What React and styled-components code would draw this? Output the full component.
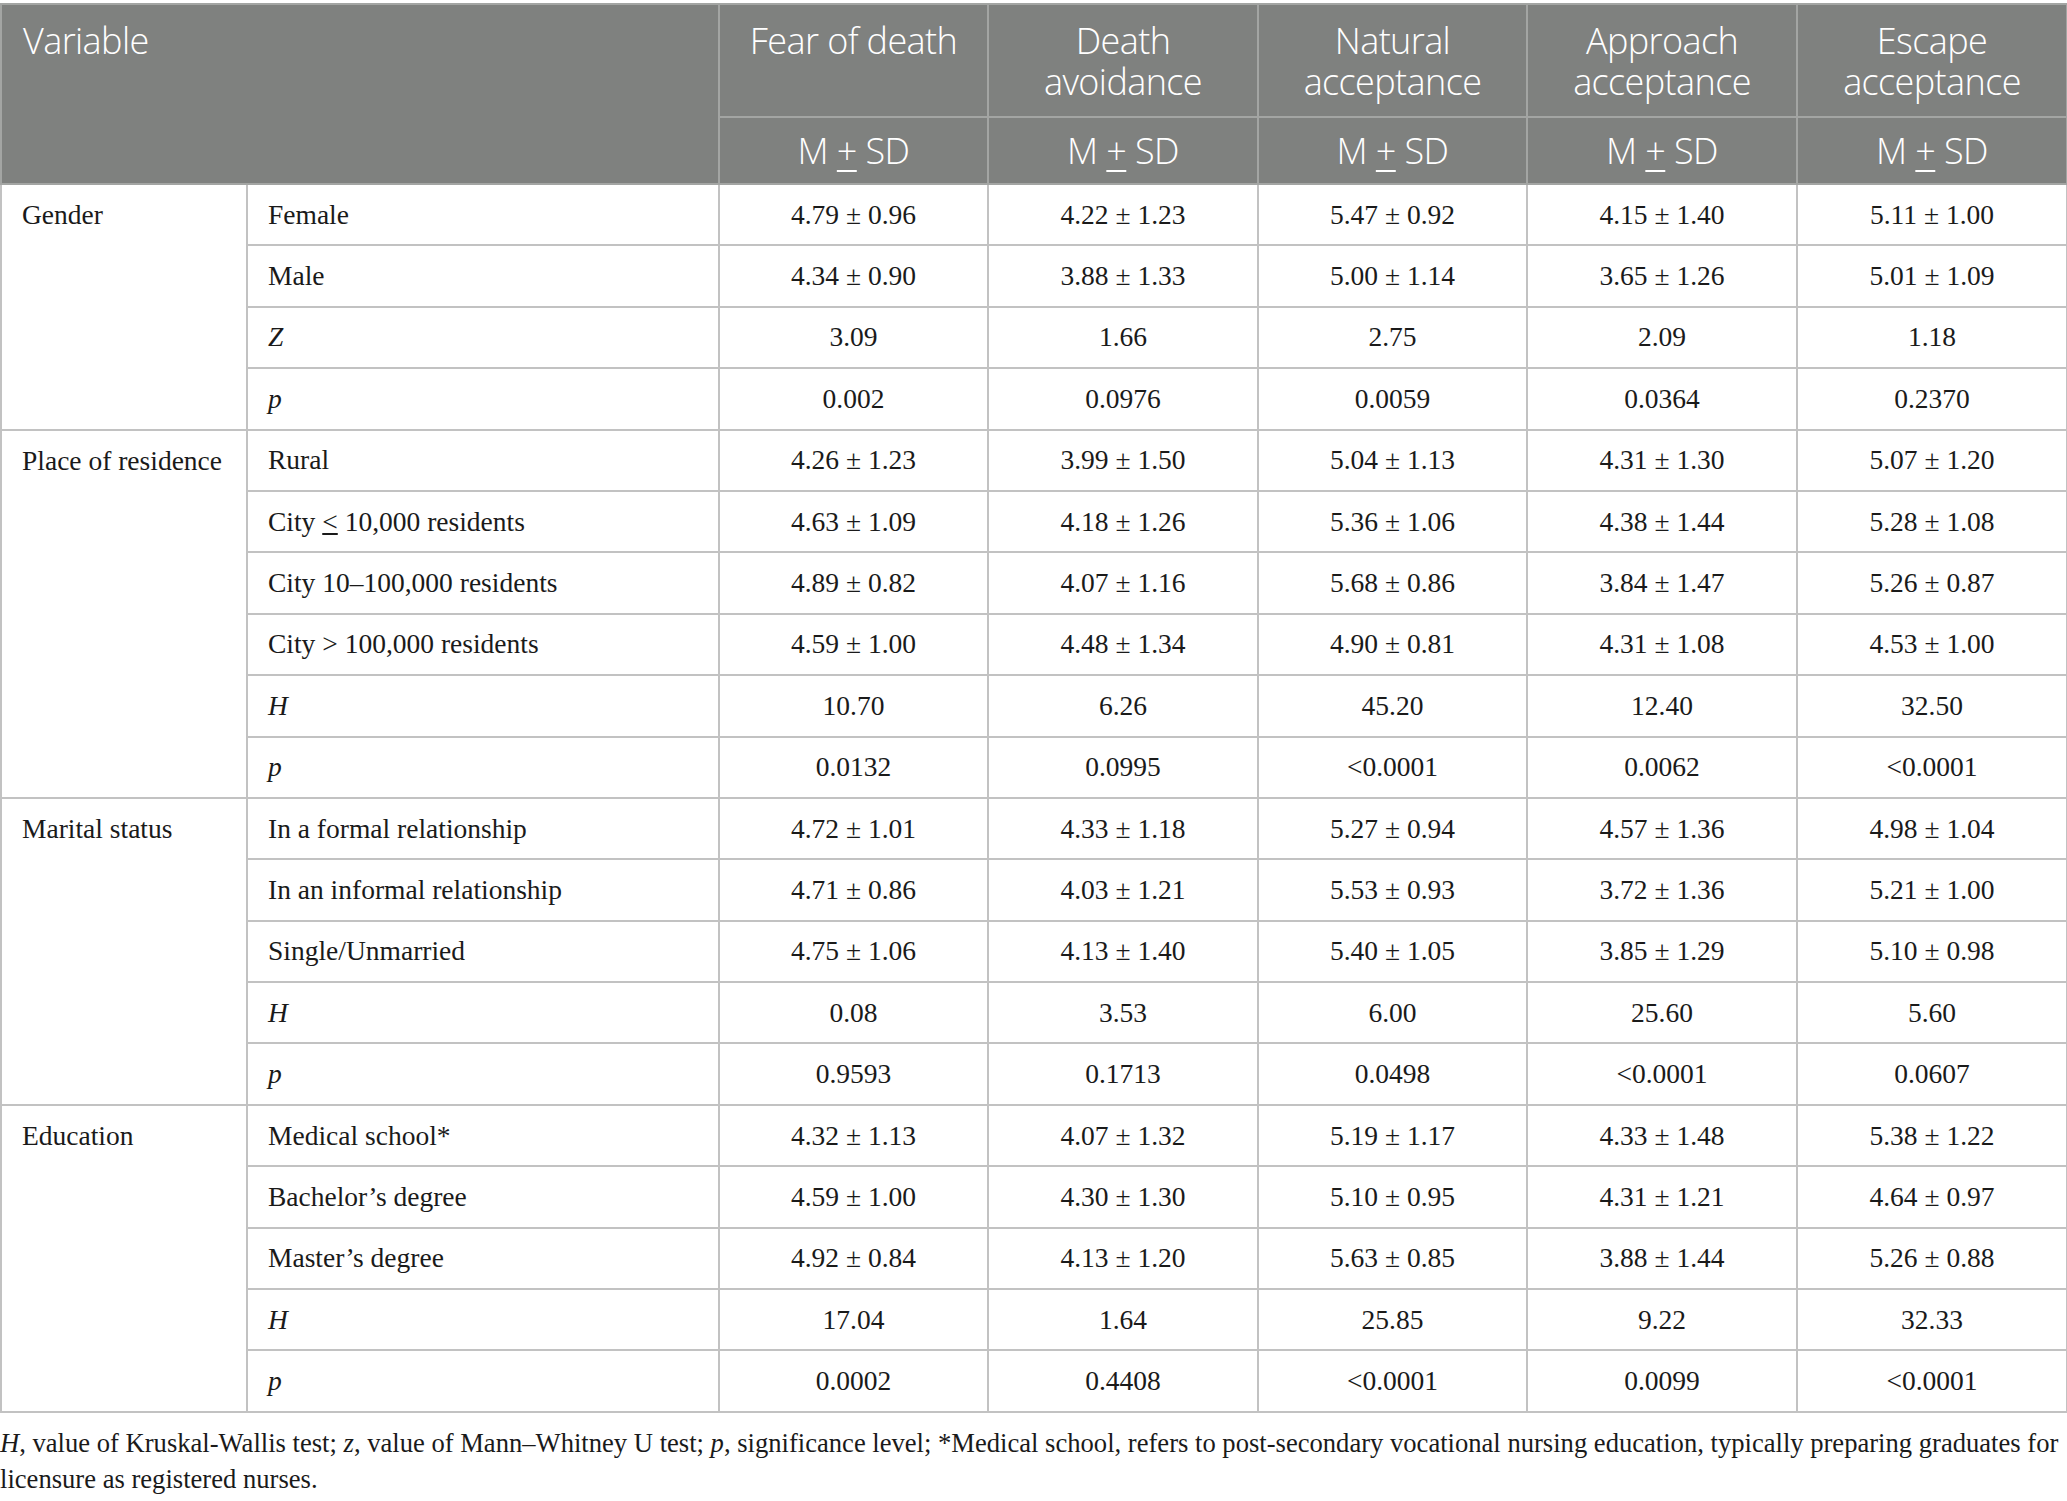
import React from "react";
import styled, { createGlobalStyle } from "styled-components";

const GlobalStyle = createGlobalStyle`
  html, body {
    margin: 0;
    padding: 0;
    background: #ffffff;
  }
`;

const Page = styled.div`
  width: 2067px;
  padding-top: 3px;
`;

const Table = styled.table`
  width: 2066px;
  table-layout: fixed;
  border-collapse: collapse;
  border: 2px solid #c2c2c2;
  font-family: "Liberation Serif", "Times New Roman", serif;
  color: #1a1a1a;
`;

const Col = styled.col`
  width: ${(p) => p.$w}px;
`;

const HeadCell = styled.th`
  box-sizing: border-box;
  background: #7f817f;
  color: #ffffff;
  font-family: "Open Sans", "Noto Sans", sans-serif;
  font-weight: 300;
  font-size: 36px;
  line-height: 41px;
  border: 2px solid #a3a5a3;
  text-align: ${(p) => (p.$left ? "left" : "center")};
  vertical-align: ${(p) => (p.$middle ? "middle" : "top")};
  padding: ${(p) => (p.$middle ? "0 8px" : p.$left ? "15px 10px 0 21px" : "15px 8px 0")};
  height: ${(p) => p.$h}px;
  letter-spacing: -0.6px;
`;

const HeadLine = styled.div`
  white-space: nowrap;
`;

const Underlined = styled.span`
  text-decoration: underline;
  text-decoration-thickness: 2px;
  text-underline-offset: 6px;
`;

const Cell = styled.td`
  border: 2px solid #c2c2c2;
  font-size: 27.5px;
  line-height: 32px;
  height: 59.4px;
  padding: 0 20px;
  text-align: ${(p) => (p.$center ? "center" : "left")};
  vertical-align: ${(p) => (p.$top ? "top" : "middle")};
  padding-top: ${(p) => (p.$top ? "14px" : "0")};
  font-style: ${(p) => (p.$italic ? "italic" : "normal")};
  white-space: nowrap;
`;

const Note = styled.p`
  margin: 12px 0 0 0;
  font-family: "Liberation Serif", "Times New Roman", serif;
  font-size: 26.6px;
  line-height: 36px;
  color: #1a1a1a;
  width: 2067px;
`;

const Em = styled.i``;

const groups = [
  {
    name: "Gender",
    rows: [
      ["Female", ["4.79 ± 0.96", "4.22 ± 1.23", "5.47 ± 0.92", "4.15 ± 1.40", "5.11 ± 1.00"]],
      ["Male", ["4.34 ± 0.90", "3.88 ± 1.33", "5.00 ± 1.14", "3.65 ± 1.26", "5.01 ± 1.09"]],
      ["Z", ["3.09", "1.66", "2.75", "2.09", "1.18"], true],
      ["p", ["0.002", "0.0976", "0.0059", "0.0364", "0.2370"], true],
    ],
  },
  {
    name: "Place of residence",
    rows: [
      ["Rural", ["4.26 ± 1.23", "3.99 ± 1.50", "5.04 ± 1.13", "4.31 ± 1.30", "5.07 ± 1.20"]],
      ["City ≤ 10,000 residents", ["4.63 ± 1.09", "4.18 ± 1.26", "5.36 ± 1.06", "4.38 ± 1.44", "5.28 ± 1.08"]],
      ["City 10–100,000 residents", ["4.89 ± 0.82", "4.07 ± 1.16", "5.68 ± 0.86", "3.84 ± 1.47", "5.26 ± 0.87"]],
      ["City > 100,000 residents", ["4.59 ± 1.00", "4.48 ± 1.34", "4.90 ± 0.81", "4.31 ± 1.08", "4.53 ± 1.00"]],
      ["H", ["10.70", "6.26", "45.20", "12.40", "32.50"], true],
      ["p", ["0.0132", "0.0995", "<0.0001", "0.0062", "<0.0001"], true],
    ],
  },
  {
    name: "Marital status",
    rows: [
      ["In a formal relationship", ["4.72 ± 1.01", "4.33 ± 1.18", "5.27 ± 0.94", "4.57 ± 1.36", "4.98 ± 1.04"]],
      ["In an informal relationship", ["4.71 ± 0.86", "4.03 ± 1.21", "5.53 ± 0.93", "3.72 ± 1.36", "5.21 ± 1.00"]],
      ["Single/Unmarried", ["4.75 ± 1.06", "4.13 ± 1.40", "5.40 ± 1.05", "3.85 ± 1.29", "5.10 ± 0.98"]],
      ["H", ["0.08", "3.53", "6.00", "25.60", "5.60"], true],
      ["p", ["0.9593", "0.1713", "0.0498", "<0.0001", "0.0607"], true],
    ],
  },
  {
    name: "Education",
    rows: [
      ["Medical school*", ["4.32 ± 1.13", "4.07 ± 1.32", "5.19 ± 1.17", "4.33 ± 1.48", "5.38 ± 1.22"]],
      ["Bachelor’s degree", ["4.59 ± 1.00", "4.30 ± 1.30", "5.10 ± 0.95", "4.31 ± 1.21", "4.64 ± 0.97"]],
      ["Master’s degree", ["4.92 ± 0.84", "4.13 ± 1.20", "5.63 ± 0.85", "3.88 ± 1.44", "5.26 ± 0.88"]],
      ["H", ["17.04", "1.64", "25.85", "9.22", "32.33"], true],
      ["p", ["0.0002", "0.4408", "<0.0001", "0.0099", "<0.0001"], true],
    ],
  },
];

const headers = [
  ["Fear of death"],
  ["Death", "avoidance"],
  ["Natural", "acceptance"],
  ["Approach", "acceptance"],
  ["Escape", "acceptance"],
];

const colWidths = [246, 472, 269, 270, 269, 270, 270];

const renderLabel = (label) => {
  if (label.startsWith("City ≤")) {
    return (
      <>
        City <u>&lt;</u> 10,000 residents
      </>
    );
  }
  return label;
};

export default function App() {
  return (
    <Page>
      <GlobalStyle />
      <Table>
        <colgroup>
          {colWidths.map((w, i) => (
            <Col key={i} $w={w} />
          ))}
        </colgroup>
        <thead>
          <tr>
            <HeadCell colSpan={2} rowSpan={2} $left $h={113}>
              Variable
            </HeadCell>
            {headers.map((h) => (
              <HeadCell key={h.join(" ")} $h={113}>
                {h.map((line) => (
                  <HeadLine key={line}>{line}</HeadLine>
                ))}
              </HeadCell>
            ))}
          </tr>
          <tr>
            {headers.map((h) => (
              <HeadCell key={h.join(" ")} $middle $h={67}>
                M <Underlined>+</Underlined> SD
              </HeadCell>
            ))}
          </tr>
        </thead>
        <tbody>
          {groups.map((g) =>
            g.rows.map(([label, values, italic], i) => (
              <tr key={g.name + label + i}>
                {i === 0 && (
                  <Cell rowSpan={g.rows.length} $top>
                    {g.name}
                  </Cell>
                )}
                <Cell $italic={italic}>{renderLabel(label)}</Cell>
                {values.map((v, j) => (
                  <Cell key={j} $center>
                    {v}
                  </Cell>
                ))}
              </tr>
            ))
          )}
        </tbody>
      </Table>
      <Note>
        <Em>H</Em>, value of Kruskal-Wallis test; <Em>z</Em>, value of Mann–Whitney U test;{" "}
        <Em>p</Em>, significance level; *Medical school, refers to post-secondary vocational
        nursing education, typically preparing graduates for licensure as registered nurses.
      </Note>
    </Page>
  );
}
